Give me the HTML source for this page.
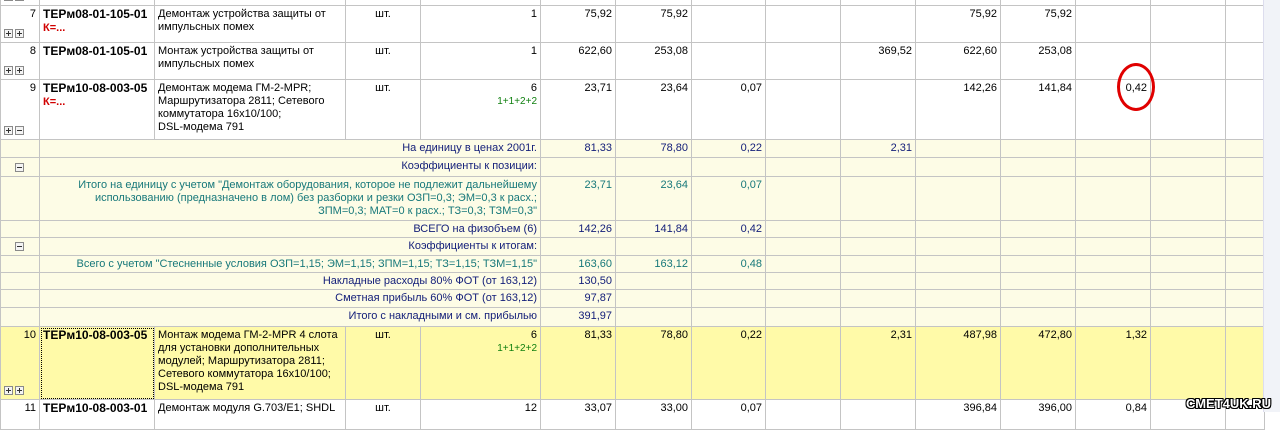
<!DOCTYPE html>
<html><head><meta charset="utf-8">
<style>
body{margin:0;width:1280px;height:412px;overflow:hidden;background:#fff;font-family:"Liberation Sans",sans-serif;font-size:11px;color:#000;position:relative}
table{position:absolute;left:0;top:-14px;border-collapse:collapse;table-layout:fixed;width:1263px}
td{border:1px solid #c4c4c4;padding:2px 3px 0 3px;vertical-align:top;overflow:hidden;line-height:13px;white-space:nowrap;position:relative}
td.n{text-align:right}
td.d{white-space:normal}
tr.s td{background:#fdfce6;color:#15207a;padding-top:2px}
tr.s td.l{text-align:right}
tr.t td{color:#17787a}
tr.y td{background:#fffaa8}
.code{font-weight:bold;font-size:12px}
.k{color:#d00000;font-weight:bold}
.g{color:#108010;font-size:10px}
.ic{position:absolute;width:7px;height:7px;border:1px solid #8a8a8a;background:#f4f4f4;bottom:4px}
.ic:before{content:"";position:absolute;left:1px;top:3px;width:5px;height:1px;background:#333}
.ic.p:after{content:"";position:absolute;left:3px;top:1px;width:1px;height:5px;background:#333}
.sb{position:absolute;left:1263px;top:0;width:17px;height:412px;background:#f1f3f8;border-left:1px solid #dde}
.th{position:absolute;left:1265px;top:15px;width:13px;height:78px;background:#c8d6f3;border:1px solid #a9bde6;border-radius:2px}
.wm{position:absolute;left:1186px;top:396px;font-weight:bold;font-size:13px;color:#fff;text-shadow:1px 0 #000,-1px 0 #000,0 1px #000,0 -1px #000,1px 1px #000,-1px -1px #000,1px -1px #000,-1px 1px #000}
.circ{position:absolute;left:1117px;top:63px;width:38px;height:48px;border:3px solid #e00000;border-radius:50%;box-sizing:border-box}
</style></head><body>
<table>
<colgroup><col style="width:39px"><col style="width:115px"><col style="width:191px"><col style="width:75px"><col style="width:120px"><col style="width:75px"><col style="width:76px"><col style="width:74px"><col style="width:75px"><col style="width:75px"><col style="width:85px"><col style="width:75px"><col style="width:75px"><col style="width:75px"><col style="width:39px"></colgroup>
<tr style="height:19px"><td><span class="ic p" style="left:3px"></span><span class="ic" style="left:14px"></span></td><td></td><td></td><td></td><td></td><td></td><td></td><td></td><td></td><td></td><td></td><td></td><td></td><td></td><td></td></tr>
<tr style="height:37px"><td class="n">7<span class="ic p" style="left:3px"></span><span class="ic p" style="left:14px"></span></td><td><span class="code">ТЕРм08-01-105-01</span><br><span class="k">К=...</span></td><td class="d">Демонтаж устройства защиты от импульсных помех</td><td style="text-align:center">шт.</td><td class="n">1</td><td class="n">75,92</td><td class="n">75,92</td><td></td><td></td><td></td><td class="n">75,92</td><td class="n">75,92</td><td></td><td></td><td></td></tr>
<tr style="height:37px"><td class="n">8<span class="ic p" style="left:3px"></span><span class="ic p" style="left:14px"></span></td><td><span class="code">ТЕРм08-01-105-01</span></td><td class="d">Монтаж устройства защиты от импульсных помех</td><td style="text-align:center">шт.</td><td class="n">1</td><td class="n">622,60</td><td class="n">253,08</td><td></td><td></td><td class="n">369,52</td><td class="n">622,60</td><td class="n">253,08</td><td></td><td></td><td></td></tr>
<tr style="height:60px"><td class="n">9<span class="ic p" style="left:3px"></span><span class="ic" style="left:14px"></span></td><td><span class="code">ТЕРм10-08-003-05</span><br><span class="k">К=...</span></td><td class="d">Демонтаж модема ГМ-2-MPR;<br>Маршрутизатора 2811; Сетевого коммутатора 16x10/100;<br>DSL-модема 791</td><td style="text-align:center">шт.</td><td class="n">6<br><span class="g">1+1+2+2</span></td><td class="n">23,71</td><td class="n">23,64</td><td class="n">0,07</td><td></td><td></td><td class="n">142,26</td><td class="n">141,84</td><td class="n">0,42</td><td></td><td></td></tr>
<tr class="s" style="height:18px"><td></td><td class="l" colspan="4">На единицу в ценах 2001г.</td><td class="n">81,33</td><td class="n">78,80</td><td class="n">0,22</td><td></td><td class="n">2,31</td><td></td><td></td><td></td><td></td><td></td></tr>
<tr class="s" style="height:19px"><td><span class="ic" style="left:14px"></span></td><td class="l" colspan="4">Коэффициенты к позиции:</td><td></td><td></td><td></td><td></td><td></td><td></td><td></td><td></td><td></td><td></td></tr>
<tr class="s t" style="height:44px"><td></td><td class="l" colspan="4" style="white-space:normal">Итого на единицу с учетом "Демонтаж оборудования, которое не подлежит дальнейшему<br>использованию (предназначено в лом) без разборки и резки ОЗП=0,3; ЭМ=0,3 к расх.;<br>ЗПМ=0,3; МАТ=0 к расх.; ТЗ=0,3; ТЗМ=0,3"</td><td class="n">23,71</td><td class="n">23,64</td><td class="n">0,07</td><td></td><td></td><td></td><td></td><td></td><td></td><td></td></tr>
<tr class="s" style="height:17px"><td></td><td class="l" colspan="4">ВСЕГО на физобъем (6)</td><td class="n">142,26</td><td class="n">141,84</td><td class="n">0,42</td><td></td><td></td><td></td><td></td><td></td><td></td><td></td></tr>
<tr class="s" style="height:18px"><td><span class="ic" style="left:14px"></span></td><td class="l" colspan="4">Коэффициенты к итогам:</td><td></td><td></td><td></td><td></td><td></td><td></td><td></td><td></td><td></td><td></td></tr>
<tr class="s t" style="height:17px"><td></td><td class="l" colspan="4">Всего с учетом "Стесненные условия ОЗП=1,15; ЭМ=1,15; ЗПМ=1,15; ТЗ=1,15; ТЗМ=1,15"</td><td class="n">163,60</td><td class="n">163,12</td><td class="n">0,48</td><td></td><td></td><td></td><td></td><td></td><td></td><td></td></tr>
<tr class="s" style="height:17px"><td></td><td class="l" colspan="4">Накладные расходы 80% ФОТ (от 163,12)</td><td class="n">130,50</td><td></td><td></td><td></td><td></td><td></td><td></td><td></td><td></td><td></td></tr>
<tr class="s" style="height:18px"><td></td><td class="l" colspan="4">Сметная прибыль 60% ФОТ (от 163,12)</td><td class="n">97,87</td><td></td><td></td><td></td><td></td><td></td><td></td><td></td><td></td><td></td></tr>
<tr class="s" style="height:19px"><td></td><td class="l" colspan="4">Итого с накладными и см. прибылью</td><td class="n">391,97</td><td></td><td></td><td></td><td></td><td></td><td></td><td></td><td></td><td></td></tr>
<tr class="y" style="height:73px"><td class="n">10<span class="ic p" style="left:3px"></span><span class="ic p" style="left:14px"></span></td><td style="outline:1px dotted #000;outline-offset:-2px"><span class="code">ТЕРм10-08-003-05</span></td><td class="d">Монтаж модема ГМ-2-MPR 4 слота для установки дополнительных модулей; Маршрутизатора 2811; Сетевого коммутатора 16x10/100; DSL-модема 791</td><td style="text-align:center">шт.</td><td class="n">6<br><span class="g">1+1+2+2</span></td><td class="n">81,33</td><td class="n">78,80</td><td class="n">0,22</td><td></td><td class="n">2,31</td><td class="n">487,98</td><td class="n">472,80</td><td class="n">1,32</td><td></td><td></td></tr>
<tr style="height:30px"><td class="n">11</td><td><span class="code">ТЕРм10-08-003-01</span></td><td class="d">Демонтаж модуля G.703/E1; SHDL</td><td style="text-align:center">шт.</td><td class="n">12</td><td class="n">33,07</td><td class="n">33,00</td><td class="n">0,07</td><td></td><td></td><td class="n">396,84</td><td class="n">396,00</td><td class="n">0,84</td><td></td><td></td></tr>
</table>
<div class="circ"></div>
<div class="sb"><div class="th"></div></div>
<div class="wm">СМЕТ4UK.RU</div>
</body></html>
